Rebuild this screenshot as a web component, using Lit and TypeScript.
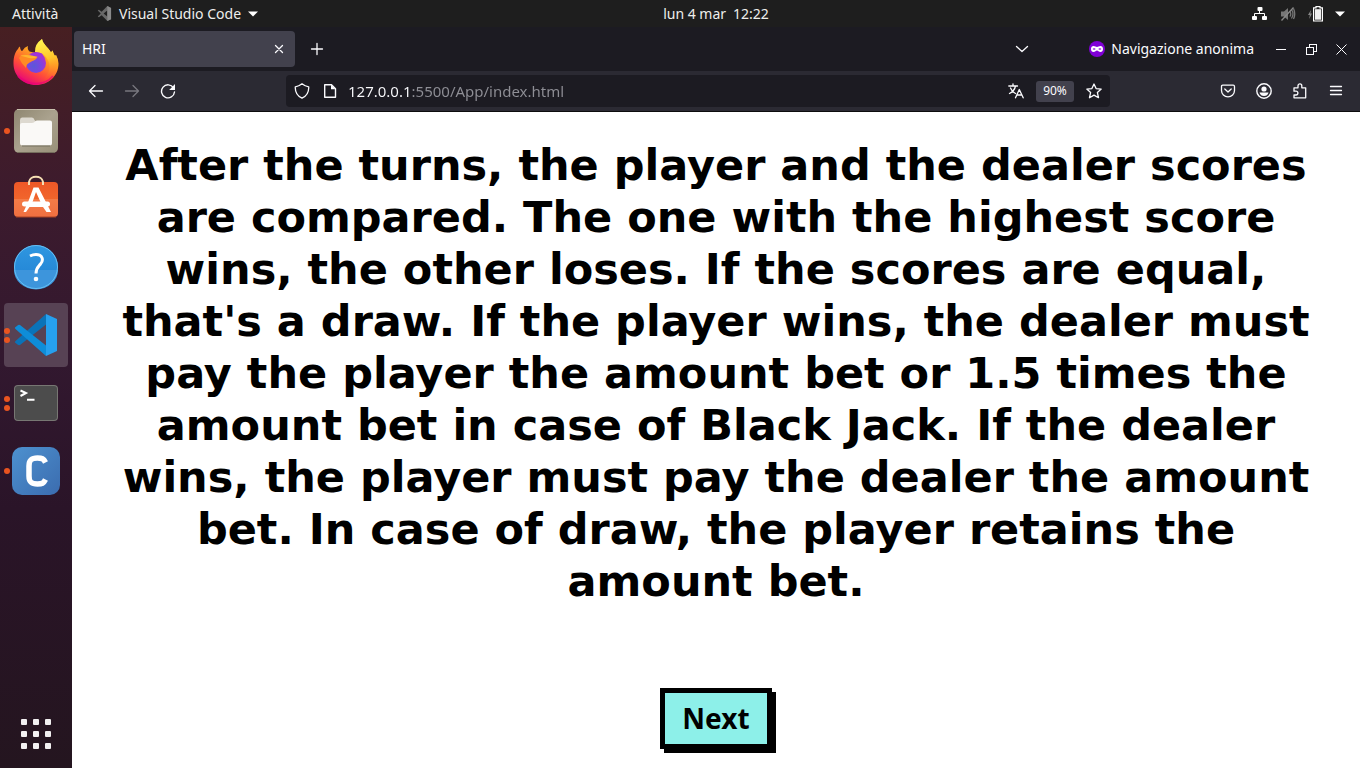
import { LitElement, html, css, svg } from "lit";
import { customElement, property } from "lit/decorators.js";
import { classMap } from "lit/directives/class-map.js";

const line = (d: string, size = 16) => html`
  <svg width=${size} height=${size} viewBox="0 0 16 16" fill="none" stroke="currentColor" stroke-width="1.3"
    stroke-linecap="round" stroke-linejoin="round" aria-hidden="true"><path d=${d} /></svg>`;

const shared = css`
  :host { display: block; box-sizing: border-box; font-family: "Noto Sans", sans-serif; }
  *, *::before, *::after { box-sizing: border-box; }
  button, input { font: inherit; color: inherit; margin: 0; }
  button { background: none; border: 0; padding: 0; cursor: pointer; }
  svg { display: block; flex: none; }
`;

@customElement("top-bar")
class TopBar extends LitElement {
  static styles = [shared, css`
    .bar {
      display: grid; grid-template-columns: 72px 1fr auto 1fr; align-items: center;
      height: 27px; background: #1e1e1e; color: #eeeeec; font-size: 14px; line-height: 20px;
    }
    .activities { padding-left: 12px; text-align: left; }
    .app { display: flex; align-items: center; gap: 7px; padding-left: 25px; justify-self: start; }
    .status { display: flex; align-items: center; justify-self: end; gap: 12px; padding-right: 15px; }
    .clock { display: flex; gap: 7px; }
  `];
  render() {
    return html`<header class="bar">
      <button class="activities">Attività</button>
      <button class="app">
        <svg width="15" height="15" viewBox="0 0 16 16" aria-hidden="true">
          <path fill="#686868" d="M11 0 15 2V14L11 16 5 9.8 2 12 0.8 11.2 4 8 0.8 4.8 2 4 5 6.2ZM11 4.7 7 8 11 11.3Z" />
          <path fill="#8a8a8a" d="M11 0 15 2V14L11 16Z" />
        </svg>
        <span>Visual Studio Code</span>
        <svg width="10" height="6" viewBox="0 0 10 6" aria-hidden="true"><path fill="#fff" d="M0 .5H10L5 5.5Z" /></svg>
      </button>
      <button class="clock"><span>lun 4 mar</span><span>12:22</span></button>
      <button class="status" aria-label="Sistema">
        <svg width="16" height="14" viewBox="0 0 16 14" fill="#fff" aria-hidden="true">
          <rect x="5.5" width="5" height="4" rx="1" /><rect x="0" y="9" width="5" height="4" rx="1" /><rect x="10" y="9" width="5" height="4" rx="1" />
          <path d="M7.500 4V6.500M2.500 9V6.500H12.500V9" fill="none" stroke="#fff" />
        </svg>
        <svg width="16" height="16" viewBox="0 0 16 16" fill="none" stroke="#777" stroke-width="1.3" aria-hidden="true">
          <path fill="#777" stroke="none" d="M1 5.5H4L8 2V14L4 10.5H1Z" />
          <path d="M10 5.5Q11.500 8 10 10.500M11.500 3.500Q14.500 8 11.500 12.500M13.500 2.500Q16 8 13.500 13" /><path d="M1.500 14.500 13.500 1.500" stroke="#8a8a8a" />
        </svg>
        <svg width="15" height="16" viewBox="0 0 15 16" aria-hidden="true">
          <path fill="#888" d="M3 4 0 9H1.800L1.200 13 4 7.500H2.300Z" />
          <path fill="none" stroke="#fff" stroke-width="1.200" d="M5.600 1.800H8V.6H12V1.800H14.400V15H5.600Z" /><path fill="#eee" d="M7 3.200H13V13.700H7Z" />
        </svg>
        <svg width="10" height="6" viewBox="0 0 10 6" aria-hidden="true"><path fill="#fff" d="M0 .5H10L5 5.5Z" /></svg>
      </button>
    </header>`;
  }
}

const art: Record<string, unknown> = {
  firefox: svg`
    <defs>
      <linearGradient id="fx" x1=".85" y1="0" x2=".3" y2="1"><stop stop-color="#fff04a" /><stop offset=".4" stop-color="#ffa020" /><stop offset=".7" stop-color="#ff4b3a" /><stop offset="1" stop-color="#e5007e" /></linearGradient>
      <linearGradient id="fy" x1=".4" y1="0" x2=".6" y2="1"><stop stop-color="#fff44f" /><stop offset=".5" stop-color="#ffc62c" /><stop offset="1" stop-color="#ff6b26" stop-opacity="0" /></linearGradient>
      <radialGradient id="fp" cx=".4" cy=".65" r=".7"><stop stop-color="#5a58d8" /><stop offset=".5" stop-color="#7a45e0" /><stop offset="1" stop-color="#b52dca" /></radialGradient>
    </defs>
    <path fill="url(#fx)" d="M1.500 24.500C1.500 17 3.500 12.500 6 10Q6.500 8 8 7.500C8 10 9 11.500 10 12.200Q12.500 8 16 7Q15 10 17.500 12.500L24 14 26 7Q27 2.500 30 0C31 5.500 36.500 8.500 39 13.500L40.500 11.500Q41.500 15 43 17L44 16Q46.500 20 46.500 24.500C46.500 37 36.500 46 24 46C11.500 46 1.500 37 1.500 24.500Z" />
    <path fill="url(#fy)" d="M23 13Q22.500 5 30 0C31 5.500 36.500 8.500 39 13.500L40.500 11.500Q41.500 15 43 17L44 16C48 27 43 36 32 40Q42 29 34 18Q30 13 23 13Z" />
    <circle cx="24" cy="24" r="10" fill="url(#fp)" />
    <path fill="#a033d8" d="M17 15.500Q23 11 30 14.500L33.500 20Q29 15.500 25 17Z" />
    <path fill="#ff8b24" d="M7 19Q10 13.500 17 16Q22 18.300 25.500 17.800C24.500 20.800 22 21.300 19.500 22.500C16 24.500 14.500 25 14 29Q9 24 7 19Z" />
    <path fill="#ffb52e" d="M8 16.500Q16 15 25.500 17.800Q22 20 17 19Z" />
    <path fill="none" stroke="#e80077" stroke-width="2" opacity=".65" d="M6 37Q13 44.500 24 44.800Q35 44.500 41 37" />`,
  files: svg`
    <defs><linearGradient id="fi" x1="0" y1="0" x2="1" y2="1"><stop stop-color="#8e8670" /><stop offset=".5" stop-color="#aaa28e" /><stop offset="1" stop-color="#989078" /></linearGradient></defs>
    <rect x="2" y="2" width="44" height="44" rx="5" fill="url(#fi)" /><path d="M5 2.500H43" stroke="#c8c0ac" /><path d="M5 45.500H43" stroke="#756e5d" />
    <path fill="#ddd9d0" d="M8 13Q8 10.500 10 10.500H20Q22 10.500 22.500 13L24 15V22H8Z" />
    <path fill="#faf9f7" d="M8 18Q8 16 10 16H20Q22 16 23.500 14Q24 13.500 25 13.500H38Q40 13.500 40 15.500V36Q40 38.500 37.500 38.500H10.500Q8 38.500 8 36Z" />
    <path stroke="#75705f" d="M10 39H38" />`,
  software: svg`
    <defs><linearGradient id="so" y1="0" y2="1" x2="0"><stop stop-color="#ee5827" /><stop offset=".49" stop-color="#f1652c" /><stop offset=".5" stop-color="#f47b47" /><stop offset="1" stop-color="#ef6f40" /></linearGradient></defs>
    <rect x="2" y="7" width="44" height="35" rx="4" fill="url(#so)" /><path d="M4 42H44" stroke="#a84324" />
    <path fill="none" stroke="#f5deb3" stroke-width="2" d="M17 10V7C18 0 30 0 31 7V10" />
    <path fill="#fff" d="M21.500 12.500H26.500L39 37H34.500L31 32H17.500L14 37H11.500L16.500 26 21.500 12.500ZM24 17 20.500 27H28.500Z" />
    <rect x="10" y="26.500" width="28" height="5" rx="2.500" fill="#fff" />`,
  help: svg`
    <defs><linearGradient id="he" y1="0" y2="1" x2="0"><stop stop-color="#2f97e0" /><stop offset="1" stop-color="#1f7fd2" /></linearGradient></defs>
    <circle cx="24" cy="24" r="22" fill="url(#he)" /><path fill="#3d95dc" d="M2 27H46A22 19.500 0 0 1 2 27Z" /><circle cx="24" cy="24" r="21.500" fill="none" stroke="#66bff3" />
    <path fill="none" stroke="#fff" stroke-width="3" d="M18 13Q21 11.500 24 11.500C30.500 11.500 32 17 28.500 21C26 24 24 25 24 30.500" /><circle cx="24" cy="36" r="2.300" fill="#fff" />`,
  code: svg`
    <path fill="#0a73b8" d="M3.500 30 34 3V13.500L8 34Q6.500 34.500 5.500 33.500L3 31.500Q2.500 31 3.500 30Z" />
    <path fill="#0e8dd8" d="M3.500 18 34 45V34.500L8 14Q6.500 13.500 5.500 14.500L3 16.500Q2.500 17 3.500 18Z" />
    <path fill="#26a0ee" d="M34 3 45 8V40L34 45Z" />`,
  terminal: svg`
    <rect x="2" y="6" width="44" height="36" rx="4" fill="#777773" /><rect x="3" y="7" width="42" height="34" rx="3" fill="#4c4c4c" />
    <path fill="none" stroke="#fff" stroke-width="2" d="M8.500 11.500 14 14 8.500 17M15 20.700H22.500" />`,
  clion: svg`
    <defs><linearGradient id="cl" x1="0" y1="0" x2="1" y2="1"><stop stop-color="#4d91cf" /><stop offset="1" stop-color="#3b6caf" /></linearGradient></defs>
    <rect width="48" height="48" rx="10" fill="url(#cl)" />
    <path fill="none" stroke="#fff" stroke-width="5.500" d="M33.500 15.500C31.500 11.500 30 11 25.500 11C19 11 17 13 17 19V29C17 35 19 37 25.500 37C30 37 31.500 36.500 33.500 32.500" />`,
};

const launchers = [
  { id: "firefox", name: "Firefox", windows: 0 },
  { id: "files", name: "File", windows: 1 },
  { id: "software", name: "Ubuntu Software", windows: 0 },
  { id: "help", name: "Aiuto", windows: 0 },
  { id: "code", name: "Visual Studio Code", windows: 2, active: true },
  { id: "terminal", name: "Terminale", windows: 2 },
  { id: "clion", name: "C", windows: 1 },
];

@customElement("side-dock")
class SideDock extends LitElement {
  static styles = [shared, css`
    .dock {
      display: flex; flex-direction: column; align-items: center; gap: 4px; height: 100%; padding: 4px 4px 2px;
      background: linear-gradient(#471f22 0%, #3d1b2d 22%, #32182f 45%, #2a1428 65%, #24151f 100%);
    }
    .launcher { position: relative; display: flex; align-items: center; justify-content: center; width: 100%; height: 64px; border-radius: 4px; }
    .active { background: #574254; }
    .dots { position: absolute; left: 0; top: 0; bottom: 0; display: flex; flex-direction: column; justify-content: center; gap: 3px; }
    .dot { width: 6px; height: 6px; border-radius: 50%; background: #e95420; }
    .grid { display: grid; place-content: center; grid-template-columns: repeat(3, 6px); gap: 6px; width: 64px; height: 64px; margin-top: auto; }
    .cell { height: 6px; border-radius: 1px; background: #f2f0f1; }
  `];
  render() {
    return html`<nav class="dock">
      ${launchers.map((l) => html`<button class=${classMap({ launcher: true, active: !!l.active })} aria-label=${l.name}>
        <span class="dots">${Array.from({ length: l.windows }, () => html`<span class="dot"></span>`)}</span>
        <svg width="48" height="48" viewBox="0 0 48 48" aria-hidden="true">${art[l.id]}</svg>
      </button>`)}
      <button class="grid" aria-label="Mostra applicazioni">${Array.from({ length: 9 }, () => html`<span class="cell"></span>`)}</button>
    </nav>`;
  }
}

@customElement("browser-chrome")
class BrowserChrome extends LitElement {
  @property() url = "127.0.0.1:5500/App/index.html";

  static styles = [shared, css`
    :host { color: #fbfbfe; font-size: 14px; line-height: 20px; }
    .tabs { display: flex; align-items: center; height: 44px; padding: 0 4px 0 2px; background: #1c1b22; }
    .tab { display: flex; align-items: center; width: 221px; height: 36px; padding: 0 4px 0 8px; border-radius: 4px; background: #42414d; }
    .title { flex: 1; text-align: left; }
    .icon { display: flex; align-items: center; justify-content: center; width: 36px; height: 32px; }
    .close { width: 24px; height: 24px; }
    .new { margin-left: 4px; }
    .list { margin-left: auto; }
    .private { display: flex; align-items: center; gap: 6px; margin: 0 12px 0 49px; }
    .win { width: 30px; }
    .toolbar { display: flex; align-items: center; height: 41px; padding: 0 6px; background: #2b2a33; border-bottom: 1px solid #0c0c0d; }
    .dim { color: #78777f; }
    .address { display: flex; align-items: center; flex: 1; min-width: 0; height: 32px; margin: 0 100px; padding-left: 2px; border-radius: 4px; background: #1c1b22; }
    .narrow { width: 28px; }
    .url {
      flex: 1; min-width: 0; height: 24px; margin-left: 4px; padding: 0; border: 0; outline: 0; font-size: 15px; line-height: 24px;
      color: transparent; background: linear-gradient(90deg, #fbfbfe 64px, #8f8f96 64px); -webkit-background-clip: text; background-clip: text;
    }
    .zoom { width: 38px; height: 21px; border-radius: 3px; background: #42414d; font-size: 12px; }
    .translate { width: 40px; }
    .star { width: 32px; margin: 0 0 0 4px; }
  `];
  render() {
    return html`
      <div class="tabs">
        <div class="tab"><span class="title">HRI</span><button class="icon close" aria-label="Chiudi scheda">${line("M4.500 4.500 11.500 11.500M11.500 4.500 4.500 11.500")}</button></div>
        <button class="icon new" aria-label="Nuova scheda">${line("M8 2.500V13.500M2.500 8H13.500")}</button>
        <button class="icon list" aria-label="Elenca schede">${line("M2.500 5.500 8 10.500 13.500 5.500")}</button>
        <div class="private">
          <svg width="16" height="16" viewBox="0 0 16 16" aria-hidden="true"><circle cx="8" cy="8" r="8" fill="#8000d7" />
            <path fill="#fff" fill-rule="evenodd" d="M4.500 5C6 5 7 6 8 6S10 5 11.500 5C13 5 14 6 14 8S13 11 11.500 11C9.800 11 9 9.500 8 9.500S6.200 11 4.500 11C3 11 2 10 2 8S3 5 4.500 5ZM3.500 8Q5 6.500 6.800 8Q5 9.500 3.500 8ZM9.200 8Q11 6.500 12.500 8Q11 9.500 9.200 8Z" /></svg>
          <span>Navigazione anonima</span>
        </div>
        <button class="icon win" aria-label="Riduci"><svg width="11" height="11" stroke="#fbfbfe"><path d="M0 5.500H10" /></svg></button>
        <button class="icon win" aria-label="Ripristina"><svg width="11" height="11" fill="none" stroke="#fbfbfe" shape-rendering="crispEdges"><path d="M.5 3.500H7.500V10.500H.5ZM3.500 3.500V.5H10.500V7.500H7.500" /></svg></button>
        <button class="icon win" aria-label="Chiudi"><svg width="11" height="11" stroke="#fbfbfe"><path d="M.5 .5 10.500 10.500M10.500 .5 .5 10.500" /></svg></button>
      </div>
      <div class="toolbar">
        <button class="icon" aria-label="Indietro">${line("M14.500 8H1.500M7 2.500 1.500 8 7 13.500")}</button>
        <button class="icon dim" aria-label="Avanti">${line("M1.500 8H14.500M9 2.500 14.500 8 9 13.500")}</button>
        <button class="icon" aria-label="Ricarica">
          <svg width="16" height="16" viewBox="0 0 16 16" aria-hidden="true"><path fill="none" stroke="currentColor" stroke-width="1.400" stroke-linecap="round" d="M13.500 4.800A6.500 6.500 0 1 0 14.500 9" /><path fill="currentColor" d="M15 1V7H9.200Z" /></svg>
        </button>
        <div class="address">
          <button class="icon narrow" aria-label="Protezione">${line("M8 .8Q11 3.300 14.700 3.800C15 9 12.500 13 8 15.200C3.500 13 1 9 1.300 3.800Q5 3.300 8 .8Z")}</button>
          <button class="icon narrow" aria-label="Informazioni sul sito">
            <svg width="16" height="16" viewBox="0 0 16 16" aria-hidden="true"><path fill="none" stroke="currentColor" stroke-width="1.400" stroke-linejoin="round" d="M3.500 1.700H9.500L13.500 5.700V14.300H2.700V1.700Z" /><path fill="currentColor" d="M9 1.500V6.200H13.500Z" /></svg>
          </button>
          <input class="url" type="text" aria-label="Indirizzo" spellcheck="false" .value=${this.url} />
          <button class="icon translate" aria-label="Traduci">${line("M.8 3H9.500M5 1V3M7.500 3Q6.500 8 1.500 10.500M2.500 5Q4 9 7.500 10.500M7.500 14.800 11.300 6.500 15.200 14.800M9 12H13.700")}</button>
          <button class="zoom">90%</button>
          <button class="icon star" aria-label="Aggiungi ai segnalibri">${line("M8 1 10.100 5.600 15.200 6.100 11.400 9.600 12.500 14.700 8 12.100 3.500 14.700 4.600 9.600 .8 6.100 5.900 5.600Z")}</button>
        </div>
        <button class="icon" aria-label="Salva in Pocket">${line("M2.800 2.200H13.200Q14.500 2.200 14.500 3.500V7.500A6.500 6.300 0 0 1 1.500 7.500V3.500Q1.500 2.200 2.800 2.200ZM4.800 6 8 9 11.200 6")}</button>
        <button class="icon" aria-label="Account">
          <svg width="16" height="16" viewBox="0 0 16 16" aria-hidden="true"><circle cx="8" cy="8" r="7.200" fill="none" stroke="currentColor" stroke-width="1.400" /><circle cx="8" cy="6" r="2.600" fill="currentColor" /><path fill="currentColor" d="M3.500 9.500H12.500Q11.500 13 8 13T3.500 9.500Z" /></svg>
        </button>
        <button class="icon" aria-label="Estensioni">${line("M2 4.800H6V2.800A1.900 1.900 0 0 1 9.800 2.800V4.800H13.700V14.800H2V12H4A1.900 1.900 0 0 0 4 8.200H2Z")}</button>
        <button class="icon" aria-label="Menu">${line("M2.500 3.500H13.500M2.500 7.500H13.500M2.500 11.500H13.500")}</button>
      </div>`;
  }
}

@customElement("rules-page")
class RulesPage extends LitElement {
  static styles = [shared, css`
    .page { display: flex; flex-direction: column; align-items: center; gap: 81px; padding: 27px 40px 0; background: #fff; color: #000; }
    .text { margin: 0; font-family: "DejaVu Sans", sans-serif; font-size: 43px; line-height: 52px; font-weight: 700; text-align: center; }
    .next { padding: 7px 17px 8px; border: 5px solid #000; background: #8df0e9; box-shadow: 4px 4px 0 #000; font-size: 28px; line-height: 36px; font-weight: 700; }
  `];
  render() {
    return html`<main class="page">
      <h1 class="text">After the turns, the player and the dealer scores are compared. The one with the highest score wins, the other loses. If the scores are equal, that's a draw. If the player wins, the dealer must pay the player the amount bet or 1.5 times the amount bet in case of Black Jack. If the dealer wins, the player must pay the dealer the amount bet. In case of draw, the player retains the amount bet.</h1>
      <button class="next">Next</button>
    </main>`;
  }
}

@customElement("app-root")
class AppRoot extends LitElement {
  static styles = [shared, css`
    :host { display: grid; grid-template: auto 1fr / 72px minmax(0, 1fr); min-height: 100vh; background: #fff; }
    .top { grid-column: 1 / -1; }
  `];
  render() {
    return html`
      <top-bar class="top"></top-bar>
      <side-dock></side-dock>
      <div><browser-chrome></browser-chrome><rules-page></rules-page></div>`;
  }
}
